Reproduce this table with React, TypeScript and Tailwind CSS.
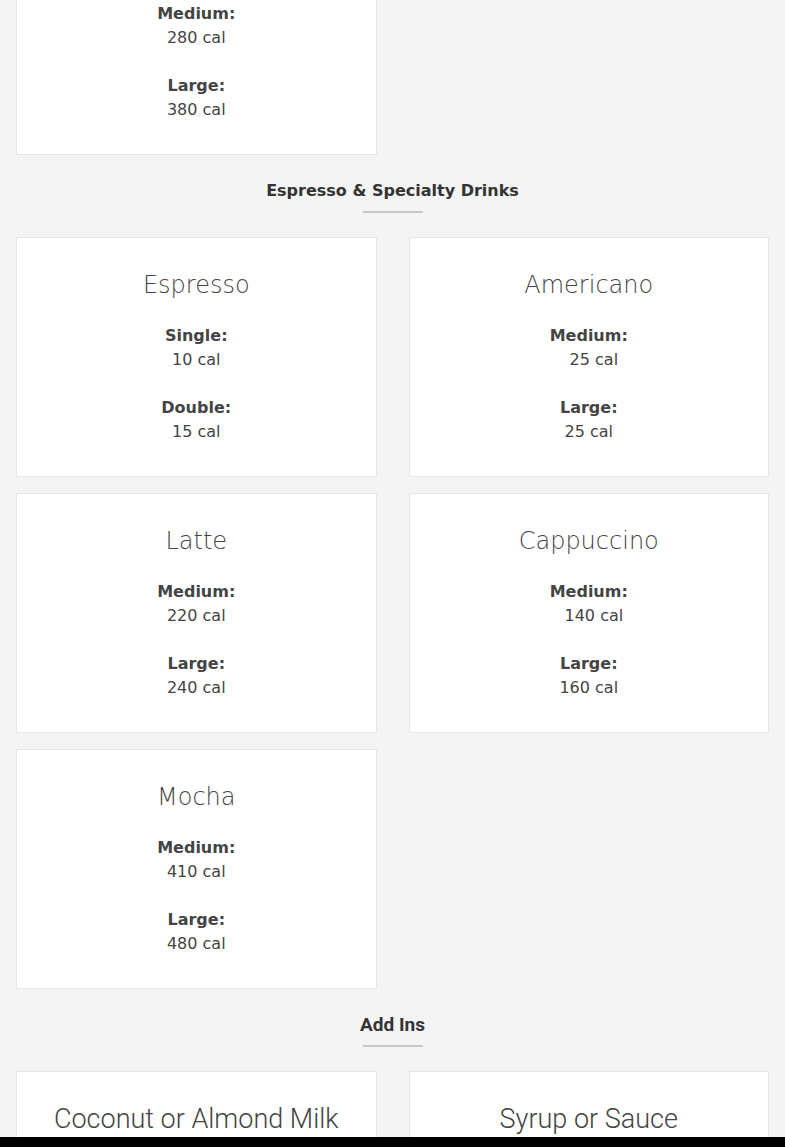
import React from 'react';

type Size = { label: string; cal: string; pad?: boolean };
type Drink = { name: string; sizes: Size[] };

const espresso: Drink[] = [
  { name: 'Espresso', sizes: [{ label: 'Single:', cal: '10 cal' }, { label: 'Double:', cal: '15 cal' }] },
  { name: 'Americano', sizes: [{ label: 'Medium:', cal: '25 cal', pad: true }, { label: 'Large:', cal: '25 cal' }] },
  { name: 'Latte', sizes: [{ label: 'Medium:', cal: '220 cal' }, { label: 'Large:', cal: '240 cal' }] },
  { name: 'Cappuccino', sizes: [{ label: 'Medium:', cal: '140 cal', pad: true }, { label: 'Large:', cal: '160 cal' }] },
  { name: 'Mocha', sizes: [{ label: 'Medium:', cal: '410 cal' }, { label: 'Large:', cal: '480 cal' }] },
];

const addIns = ['Coconut or Almond Milk', 'Syrup or Sauce'];

const Sizes: React.FC<{ sizes: Size[] }> = ({ sizes }) => (
  <div className="text-base leading-6 text-[#444]">
    {sizes.map((s, i) => (
      <div key={s.label}>
        {i > 0 && <div className="h-6" />}
        <div className="font-bold">{s.label}</div>
        <div>{s.pad ? '\u00a0\u00a0' + s.cal : s.cal}</div>
      </div>
    ))}
  </div>
);

const Card: React.FC<{ drink: Drink }> = ({ drink }) => (
  <div className="bg-white border border-[#e6e6e6] pt-[33px] pb-8 text-center">
    <h3 className="text-2xl leading-[29px] font-extralight text-[#444] mb-6">{drink.name}</h3>
    <Sizes sizes={drink.sizes} />
  </div>
);

const Heading: React.FC<{ title: string; condensed?: boolean }> = ({ title, condensed }) => (
  <div className="flex flex-col items-center pt-6 pb-[24px]">
    <h2
      className={
        condensed
          ? "text-[19px] leading-6 font-bold text-[#333] font-['Roboto',sans-serif]"
          : 'text-base leading-6 font-bold text-[#333]'
      }
    >
      {title}
    </h2>
    <div className="mt-2 w-[60px] h-[2px] bg-[#c8c8c8]" />
  </div>
);

export default function App() {
  return (
    <div className="min-h-screen bg-[#f4f4f4] font-['DejaVu_Sans',sans-serif] px-4 pb-10">
      <div className="grid grid-cols-2 gap-x-8">
        <div className="bg-white border border-t-0 border-[#e6e6e6] pt-[2px] pb-8 text-center">
          <Sizes sizes={[{ label: 'Medium:', cal: '280 cal' }, { label: 'Large:', cal: '380 cal' }]} />
        </div>
      </div>

      <Heading title="Espresso & Specialty Drinks" />
      <div className="grid grid-cols-2 gap-x-8 gap-y-4">
        {espresso.map((d) => (
          <Card key={d.name} drink={d} />
        ))}
      </div>

      <Heading title="Add Ins" condensed />
      <div className="grid grid-cols-2 gap-x-8 gap-y-4">
        {addIns.map((n) => (
          <div key={n} className="bg-white border border-[#e6e6e6] pt-[33px] pb-8 text-center">
            <h3 className="text-[27px] leading-[29px] font-light text-[#444] font-['Roboto',sans-serif]">
              {n}
            </h3>
            <div className="h-40" />
          </div>
        ))}
      </div>

      <div className="fixed left-0 right-0 bottom-0 h-[10px] bg-black" />
    </div>
  );
}
